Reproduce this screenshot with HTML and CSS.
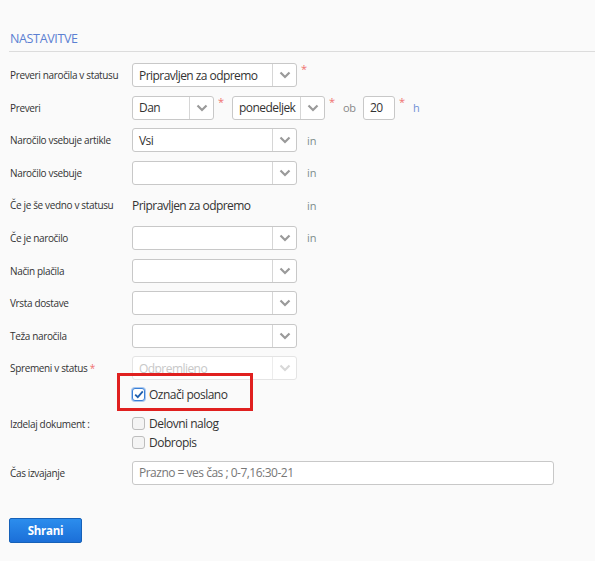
FILE: index.html
```html
<!DOCTYPE html>
<html>
<head>
<meta charset="utf-8">
<link rel="stylesheet" href="styles.css">
</head>
<body>
<div class="page">
  <h2 class="title">NASTAVITVE</h2>
  <div class="form">
    <div class="row">
      <div class="label">Preveri naročila v statusu</div>
      <div class="field">
        <div class="select w165"><span class="value">Pripravljen za odpremo</span><span class="arrow"><svg width="12" height="8" viewBox="0 0 12 8"><path d="M1.5 1.5 L6 6 L10.5 1.5" fill="none" stroke="#9a9a9a" stroke-width="2.2"/></svg></span></div>
        <span class="req">*</span>
      </div>
    </div>
    <div class="row">
      <div class="label">Preveri</div>
      <div class="field">
        <div class="select w82"><span class="value">Dan</span><span class="arrow"><svg width="12" height="8" viewBox="0 0 12 8"><path d="M1.5 1.5 L6 6 L10.5 1.5" fill="none" stroke="#9a9a9a" stroke-width="2.2"/></svg></span></div>
        <span class="req">*</span>
        <div class="select w93"><span class="value">ponedeljek</span><span class="arrow"><svg width="12" height="8" viewBox="0 0 12 8"><path d="M1.5 1.5 L6 6 L10.5 1.5" fill="none" stroke="#9a9a9a" stroke-width="2.2"/></svg></span></div>
        <span class="req">*</span>
        <span class="ob">ob</span>
        <div class="input w32"><span class="value">20</span></div>
        <span class="req">*</span>
        <span class="unit">h</span>
      </div>
    </div>
    <div class="row">
      <div class="label">Naročilo vsebuje artikle</div>
      <div class="field">
        <div class="select w165"><span class="value">Vsi</span><span class="arrow"><svg width="12" height="8" viewBox="0 0 12 8"><path d="M1.5 1.5 L6 6 L10.5 1.5" fill="none" stroke="#9a9a9a" stroke-width="2.2"/></svg></span></div>
        <span class="in">in</span>
      </div>
    </div>
    <div class="row">
      <div class="label">Naročilo vsebuje</div>
      <div class="field">
        <div class="select w165"><span class="value"></span><span class="arrow"><svg width="12" height="8" viewBox="0 0 12 8"><path d="M1.5 1.5 L6 6 L10.5 1.5" fill="none" stroke="#9a9a9a" stroke-width="2.2"/></svg></span></div>
        <span class="in">in</span>
      </div>
    </div>
    <div class="row">
      <div class="label">Če je še vedno v statusu</div>
      <div class="field">
        <div class="static w165">Pripravljen za odpremo</div>
        <span class="in">in</span>
      </div>
    </div>
    <div class="row">
      <div class="label">Če je naročilo</div>
      <div class="field">
        <div class="select w165"><span class="value"></span><span class="arrow"><svg width="12" height="8" viewBox="0 0 12 8"><path d="M1.5 1.5 L6 6 L10.5 1.5" fill="none" stroke="#9a9a9a" stroke-width="2.2"/></svg></span></div>
        <span class="in">in</span>
      </div>
    </div>
    <div class="row">
      <div class="label">Način plačila</div>
      <div class="field">
        <div class="select w165"><span class="value"></span><span class="arrow"><svg width="12" height="8" viewBox="0 0 12 8"><path d="M1.5 1.5 L6 6 L10.5 1.5" fill="none" stroke="#9a9a9a" stroke-width="2.2"/></svg></span></div>
      </div>
    </div>
    <div class="row">
      <div class="label">Vrsta dostave</div>
      <div class="field">
        <div class="select w165"><span class="value"></span><span class="arrow"><svg width="12" height="8" viewBox="0 0 12 8"><path d="M1.5 1.5 L6 6 L10.5 1.5" fill="none" stroke="#9a9a9a" stroke-width="2.2"/></svg></span></div>
      </div>
    </div>
    <div class="row">
      <div class="label">Teža naročila</div>
      <div class="field">
        <div class="select w165"><span class="value"></span><span class="arrow"><svg width="12" height="8" viewBox="0 0 12 8"><path d="M1.5 1.5 L6 6 L10.5 1.5" fill="none" stroke="#9a9a9a" stroke-width="2.2"/></svg></span></div>
      </div>
    </div>
    <div class="row">
      <div class="label">Spremeni v status <span class="req-inline">*</span></div>
      <div class="field">
        <div class="select w165 disabled"><span class="value">Odpremljeno</span><span class="arrow"><svg width="12" height="8" viewBox="0 0 12 8"><path d="M1.5 1.5 L6 6 L10.5 1.5" fill="none" stroke="#d8d8d8" stroke-width="2.2"/></svg></span></div>
      </div>
    </div>
    <div class="row check-row">
      <div class="label"></div>
      <div class="field highlight-wrap">
        <span class="checkbox checked"><svg width="10" height="9" viewBox="0 0 10 9"><path d="M1.2 4.6 L3.8 7.2 L8.8 1.4" fill="none" stroke="#1f5fae" stroke-width="1.8"/></svg></span>
        <span class="check-label">Označi poslano</span>
        <span class="highlight"></span>
      </div>
    </div>
    <div class="row doc-row">
      <div class="label">Izdelaj dokument :</div>
      <div class="checks">
        <div class="check-line"><span class="checkbox"></span><span class="check-label">Delovni nalog</span></div>
        <div class="check-line"><span class="checkbox"></span><span class="check-label">Dobropis</span></div>
      </div>
    </div>
    <div class="row time-row">
      <div class="label">Čas izvajanje</div>
      <div class="field">
        <div class="input w422"><span class="placeholder">Prazno = ves čas ; 0-7,16:30-21</span></div>
      </div>
    </div>
  </div>
  <button class="btn">Shrani</button>
</div>
</body>
</html>
```
FILE: styles.css
```css
* { box-sizing: border-box; }
html, body { margin: 0; padding: 0; }
body {
  background: #fafafa;
  font-family: "Open Sans", "Liberation Sans", sans-serif;
  color: #333;
  width: 595px;
  height: 561px;
  overflow: hidden;
}
.page {
  padding: 31px 0 0 9px;
}
.title {
  margin: 0;
  padding: 0 0 0 1px;
  font-size: 12.5px;
  letter-spacing: -0.35px;
  font-weight: 400;
  color: #5b80d2;
  line-height: 16px;
  height: 21px;
  border-bottom: 1px solid #dcdcdc;
}
.form {
  padding-top: 11px;
}
.row {
  display: flex;
  align-items: center;
  height: 24px;
  margin-bottom: 8.6px;
}
.label {
  width: 123px;
  flex: none;
  font-size: 10px;
  letter-spacing: -0.35px;
  color: #333;
  padding-left: 1px;
  white-space: nowrap;
}
.field {
  display: flex;
  align-items: center;
  position: relative;
}
.select, .input {
  height: 24px;
  background: #fff;
  border: 1px solid #c8c8c8;
  border-radius: 3px;
  display: flex;
  align-items: stretch;
  font-size: 12px;
  letter-spacing: -0.55px;
  color: #333;
}
.select .value, .input .value {
  flex: 1;
  display: flex;
  align-items: center;
  padding-left: 6px;
  white-space: nowrap;
  overflow: hidden;
}
.select .arrow {
  width: 24px;
  flex: none;
  border-left: 1px solid #d6d6d6;
  display: flex;
  align-items: center;
  justify-content: center;
}
.select.disabled {
  border-color: #e4e4e4;
}
.select.disabled .value { color: #c8c8c8; }
.select.disabled .arrow { border-left-color: #ececec; }
.w165 { width: 165px; }
.w82 { width: 82px; }
.w93 { width: 93px; }
.w32 { width: 32px; }
.w422 { width: 422px; }
.req {
  color: #f07070;
  font-size: 11px;
  align-self: flex-start;
  line-height: 10px;
  margin-top: 1px;
  width: 18px;
  padding-left: 4px;
}
.req-inline {
  color: #f07070;
}
.ob {
  font-size: 11px;
  letter-spacing: -0.3px;
  color: #888;
  width: 20px;
}
.unit {
  font-size: 11px;
  color: #6f8fd5;
}
.in {
  font-size: 11px;
  color: #7d8d8d;
  margin-left: 10px;
}
.static {
  font-size: 12px;
  letter-spacing: -0.55px;
  color: #333;
}
.check-row {
  height: 19px;
  margin-top: -3.6px;
  margin-bottom: 10px;
}
.highlight-wrap { height: 19px; }
.checkbox {
  width: 13px;
  height: 13px;
  border: 1px solid #bdbdbd;
  border-radius: 3px;
  background: #f4f4f4;
  flex: none;
  display: flex;
  align-items: center;
  justify-content: center;
}
.checkbox.checked {
  border-color: #3a7fd6;
  background: #fff;
  box-shadow: 0 0 0 1px #a9c8ef;
}
.check-label {
  font-size: 12px;
  letter-spacing: -0.5px;
  color: #333;
  margin-left: 4px;
}
.highlight {
  position: absolute;
  left: -15px;
  top: -12.5px;
  width: 136px;
  height: 38px;
  border: 3px solid #e0201f;
}
.doc-row {
  height: 38px;
  align-items: flex-start;
  margin-bottom: 8.5px;
}
.doc-row .label { padding-top: 3px; }
.checks { display: flex; flex-direction: column; }
.check-line {
  display: flex;
  align-items: center;
  height: 19px;
}
.placeholder {
  display: flex;
  align-items: center;
  padding-left: 6px;
  color: #777;
  font-size: 12px;
  letter-spacing: -0.5px;
}
.btn {
  margin-top: 33px;
  width: 73px;
  height: 25px;
  border: 1px solid #1661b8;
  border-radius: 2px;
  background: linear-gradient(#2c8ded, #1b6fd8);
  color: #fff;
  font-family: "Open Sans", "Liberation Sans", sans-serif;
  font-weight: 700;
  font-size: 11.5px;
  letter-spacing: -0.3px;
  padding: 0;
  display: block;
}
```
